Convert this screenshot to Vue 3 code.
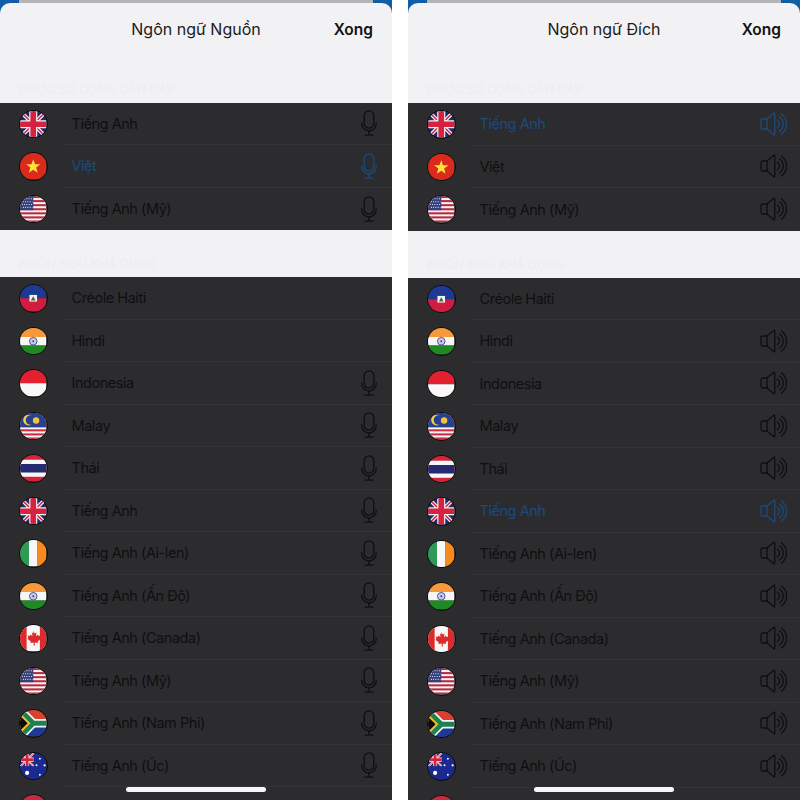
<script setup>
const available = [
  { name: 'Créole Haiti', flag: 'ht', noMic: true, noVoice: true },
  { name: 'Hindi', flag: 'in', noMic: true },
  { name: 'Indonesia', flag: 'id' },
  { name: 'Malay', flag: 'my' },
  { name: 'Thái', flag: 'th' },
  { name: 'Tiếng Anh', flag: 'gb', target: true },
  { name: 'Tiếng Anh (Ai-len)', flag: 'ie' },
  { name: 'Tiếng Anh (Ấn Độ)', flag: 'in' },
  { name: 'Tiếng Anh (Canada)', flag: 'ca' },
  { name: 'Tiếng Anh (Mỹ)', flag: 'us' },
  { name: 'Tiếng Anh (Nam Phi)', flag: 'za' },
  { name: 'Tiếng Anh (Úc)', flag: 'au' },
  // only the top of this flag shows above the fold
  { name: '', flag: 'cn', noMic: true, noVoice: true }
];

const panels = [
  {
    id: 'source',
    title: 'Ngôn ngữ Nguồn',
    recent: [
      { name: 'Tiếng Anh', flag: 'gb' },
      { name: 'Việt', flag: 'vn', active: true },
      { name: 'Tiếng Anh (Mỹ)', flag: 'us' }
    ],
    list: available.map((lang) => ({ ...lang, active: false, hasIcon: !lang.noMic }))
  },
  {
    id: 'target',
    title: 'Ngôn ngữ Đích',
    recent: [
      { name: 'Tiếng Anh', flag: 'gb', active: true },
      { name: 'Việt', flag: 'vn' },
      { name: 'Tiếng Anh (Mỹ)', flag: 'us' }
    ],
    list: available.map((lang) => ({ ...lang, active: !!lang.target, hasIcon: !lang.noVoice }))
  }
];

const sections = (panel) => [
  { label: 'ĐƯỢC SỬ DỤNG GẦN ĐÂY', rows: panel.recent.map((row) => ({ ...row, hasIcon: true })) },
  { label: 'NGÔN NGỮ KHẢ DỤNG', rows: panel.list }
];

const stripes = [0, 2, 4, 6, 8, 10, 12];
</script>

<template>
  <svg class="flag-defs" aria-hidden="true">
    <symbol id="flag-gb" viewBox="0 0 28 28">
      <rect width="28" height="28" fill="#1c2a6e" />
      <path d="M0 0L28 28M28 0L0 28" stroke="#f2f2f2" stroke-width="4" />
      <path d="M0 0L28 28M28 0L0 28" stroke="#d5233f" stroke-width="1.6" />
      <path d="M14 0V28M0 14H28" stroke="#f2f2f2" stroke-width="8.5" />
      <path d="M14 0V28M0 14H28" stroke="#d5233f" stroke-width="6" />
    </symbol>
    <symbol id="flag-vn" viewBox="0 0 28 28">
      <rect width="28" height="28" fill="#da2a1e" />
      <polygon points="14,6.5 15.9,11.8 21.5,12 17.1,15.4 18.6,20.8 14,17.6 9.4,20.8 10.9,15.4 6.5,12 12.1,11.8" fill="#fde23a" />
    </symbol>
    <symbol id="flag-us" viewBox="0 0 28 28">
      <rect width="28" height="28" fill="#f4f4f4" />
      <rect v-for="n in stripes" :key="n" y="0" width="28" height="2.15" :transform="`translate(0 ${n * 2.154})`" fill="#b8283f" />
      <rect width="14" height="15" fill="#33407c" />
      <path d="M2 3H13M3 6H13M2 9H13M3 12H13" stroke="#e8e8f0" stroke-width="1.1" stroke-dasharray="1 1.4" />
    </symbol>
    <symbol id="flag-ht" viewBox="0 0 28 28">
      <rect width="28" height="14" fill="#1c3a94" />
      <rect y="14" width="28" height="14" fill="#d01c3f" />
      <rect x="10" y="10.5" width="8" height="7" fill="#f4f4f4" />
      <path d="M11.5 16.5L14 12L16.5 16.5Z" fill="#4a6a3a" />
    </symbol>
    <symbol id="flag-in" viewBox="0 0 28 28">
      <rect width="28" height="9.5" fill="#f7983a" />
      <rect y="9.5" width="28" height="9" fill="#f6f6f6" />
      <rect y="18.5" width="28" height="9.5" fill="#1f8a24" />
      <circle cx="14" cy="14" r="4" fill="#c9cbe6" stroke="#3c3f8f" stroke-width=".9" />
      <circle cx="14" cy="14" r="1" fill="#3c3f8f" />
    </symbol>
    <symbol id="flag-id" viewBox="0 0 28 28">
      <rect width="28" height="14" fill="#e3202f" />
      <rect y="14" width="28" height="14" fill="#f8f8f8" />
    </symbol>
    <symbol id="flag-my" viewBox="0 0 28 28">
      <rect width="28" height="28" fill="#f4f4f4" />
      <rect v-for="n in stripes" :key="n" y="0" width="28" height="2.15" :transform="`translate(0 ${n * 2.154})`" fill="#cf2a3f" />
      <rect width="28" height="15" fill="#27408f" />
      <circle cx="9" cy="7.5" r="5.6" fill="#f0d34a" />
      <circle cx="11" cy="7.5" r="5" fill="#27408f" />
      <circle cx="17" cy="8" r="3.4" fill="#f0c33a" />
    </symbol>
    <symbol id="flag-th" viewBox="0 0 28 28">
      <rect width="28" height="28" fill="#d3243c" />
      <rect y="5" width="28" height="18" fill="#f6f6f6" />
      <rect y="9.5" width="28" height="9" fill="#232a70" />
    </symbol>
    <symbol id="flag-ie" viewBox="0 0 28 28">
      <rect width="9.5" height="28" fill="#2f9a55" />
      <rect x="9.5" width="9" height="28" fill="#f7f7f7" />
      <rect x="18.5" width="9.5" height="28" fill="#f58a1f" />
    </symbol>
    <symbol id="flag-ca" viewBox="0 0 28 28">
      <rect width="28" height="28" fill="#f7f7f7" />
      <rect width="7" height="28" fill="#dd2a2a" />
      <rect x="21" width="7" height="28" fill="#dd2a2a" />
      <path d="M14 6l1.6 3 1.8-1-.6 4 2.2-2 .6 1.6 2.4-.4-.8 2.6 1 .6-3.6 3 .4 1.6-3.4-.4v3h-1.2v-3l-3.4.4.4-1.6-3.6-3 1-.6-.8-2.6 2.4.4.6-1.6 2.2 2-.6-4 1.8 1z" fill="#dd2a2a" />
    </symbol>
    <symbol id="flag-za" viewBox="0 0 28 28">
      <rect width="28" height="14" fill="#d8402f" />
      <rect y="14" width="28" height="14" fill="#1f3a94" />
      <path d="M0 0L14 14H28M14 14L0 28" fill="none" stroke="#f5f5f5" stroke-width="9" />
      <path d="M0 0L14 14H28M14 14L0 28" fill="none" stroke="#1f8050" stroke-width="5.5" />
      <polygon points="0,3 11,14 0,25" fill="#f2bd2c" />
      <polygon points="0,6 8,14 0,22" fill="#0c0c0c" />
    </symbol>
    <symbol id="flag-au" viewBox="0 0 28 28">
      <rect width="28" height="28" fill="#1a2a92" />
      <use href="#flag-gb" width="15" height="14" />
      <circle cx="7.5" cy="21" r="2.2" fill="#fff" />
      <circle cx="21" cy="6" r="1" fill="#fff" />
      <circle cx="26" cy="13" r="1.2" fill="#fff" />
      <circle cx="17.5" cy="13" r="1" fill="#fff" />
      <circle cx="21" cy="23" r="1" fill="#fff" />
    </symbol>
    <symbol id="flag-cn" viewBox="0 0 28 28">
      <rect width="28" height="28" fill="#c9283e" />
    </symbol>
  </svg>

  <div class="page">
    <section v-for="panel in panels" :key="panel.id" class="panel" :class="`panel--${panel.id}`">
      <div class="sheet">
        <header class="sheet__head">
          <h1 class="sheet__title">{{ panel.title }}</h1>
          <span class="sheet__done">Xong</span>
        </header>

        <div v-for="section in sections(panel)" :key="section.label" class="group">
          <div class="group__label">{{ section.label }}</div>
          <ul class="rows">
            <li v-for="row in section.rows" :key="row.flag + row.name" class="row" :class="{ 'row--active': row.active }">
              <span class="flag"><svg viewBox="0 0 28 28"><use :href="`#flag-${row.flag}`" width="28" height="28" /></svg></span>
              <div class="row__body">
                <span class="row__name">{{ row.name }}</span>
                <template v-if="row.hasIcon">
                  <svg v-if="panel.id === 'source'" class="mic" viewBox="0 0 16 26" fill="none" stroke="currentColor" stroke-width="1.3">
                    <rect x="3.2" y="0.8" width="9.6" height="17.4" rx="4.8" />
                    <path d="M0.8 12.5v1.2a7.2 7.2 0 0 0 14.4 0v-1.2" />
                    <path d="M8 21v4M3.5 25.2h9" />
                  </svg>
                  <svg v-else class="speaker" viewBox="0 0 27 24" fill="none" stroke="currentColor" stroke-width="1.3" stroke-linejoin="round" stroke-linecap="round">
                    <path d="M7 7L13.6 1.4Q14.8 .6 14.8 2V22Q14.8 23.4 13.6 22.6L7 17H3Q1 17 1 15V9Q1 7 3 7Z" />
                    <path d="M7 7V17" />
                    <path d="M17.5 8.2a4.6 4.6 0 0 1 0 7.6" />
                    <path d="M19.6 5a8.6 8.6 0 0 1 0 14" />
                    <path d="M21.6 2a12.6 12.6 0 0 1 0 20" />
                  </svg>
                </template>
              </div>
            </li>
          </ul>
        </div>
      </div>
      <div class="home-bar"></div>
    </section>
  </div>
</template>

<style>
html,
body {
  margin: 0;
  background: #fff;
}
</style>

<style scoped>
.flag-defs {
  display: none;
}

.page {
  display: flex;
  justify-content: space-between;
  width: 800px;
  height: 800px;
  overflow: hidden;
  background: #fff;
  font-family: Inter, "Liberation Sans", sans-serif;
}

.panel {
  position: relative;
  width: 392px;
  height: 800px;
  padding-top: 3px;
  box-sizing: border-box;
  overflow: hidden;
  background: linear-gradient(90deg, #0f5ea6 19px, #b4b4b6 19px, #b4b4b6 373px, #0f5ea6 373px);
}

.sheet {
  height: 797px;
  overflow: hidden;
  border-radius: 10px 10px 0 0;
  background: #f2f2f4;
}

.sheet__head {
  position: relative;
  display: flex;
  align-items: center;
  justify-content: center;
  height: 52px;
}

.panel--target .sheet__head {
  height: 52.5px;
}

.sheet__title {
  margin: 0;
  font-size: 16px;
  font-weight: 400;
  color: #1a1a1c;
}

.sheet__done {
  position: absolute;
  top: 17px;
  right: 19px;
  font-size: 15.5px;
  font-weight: 600;
  color: #111;
}

.group__label {
  display: flex;
  align-items: flex-end;
  height: 47.5px;
  padding: 0 0 6px 19px;
  box-sizing: border-box;
  font-size: 12px;
  letter-spacing: 0.2px;
  color: #ecedf0;
}

.group + .group .group__label {
  height: 47px;
}

.rows {
  margin: 0;
  padding: 0;
  list-style: none;
  background: #2c2c2e;
}

.row {
  display: flex;
  align-items: center;
  height: 42.5px;
  padding-left: 19px;
  color: #0f0f11;
}

.row--active {
  color: #1a4a7e;
}

.flag {
  flex: none;
  width: 28.5px;
  height: 28.5px;
  box-sizing: border-box;
  overflow: hidden;
  border: 1px solid #0a0a0a;
  border-radius: 50%;
}

.flag svg {
  display: block;
  width: 100%;
  height: 100%;
}

.row__body {
  display: flex;
  flex: 1;
  align-items: center;
  justify-content: space-between;
  align-self: stretch;
  margin-left: 14.5px;
  padding: 0 13px 0 9.5px;
  border-bottom: 1px solid #333335;
}

.row:last-child .row__body {
  border-bottom: 0;
}

.row__name {
  font-size: 14.5px;
  letter-spacing: -0.45px;
}

.mic {
  width: 16px;
  height: 26px;
  margin-right: 2px;
}

.speaker {
  width: 27px;
  height: 24px;
}

.home-bar {
  position: absolute;
  left: 126px;
  bottom: 8px;
  width: 140px;
  height: 5px;
  border-radius: 3px;
  background: #f7f7f7;
}
</style>
